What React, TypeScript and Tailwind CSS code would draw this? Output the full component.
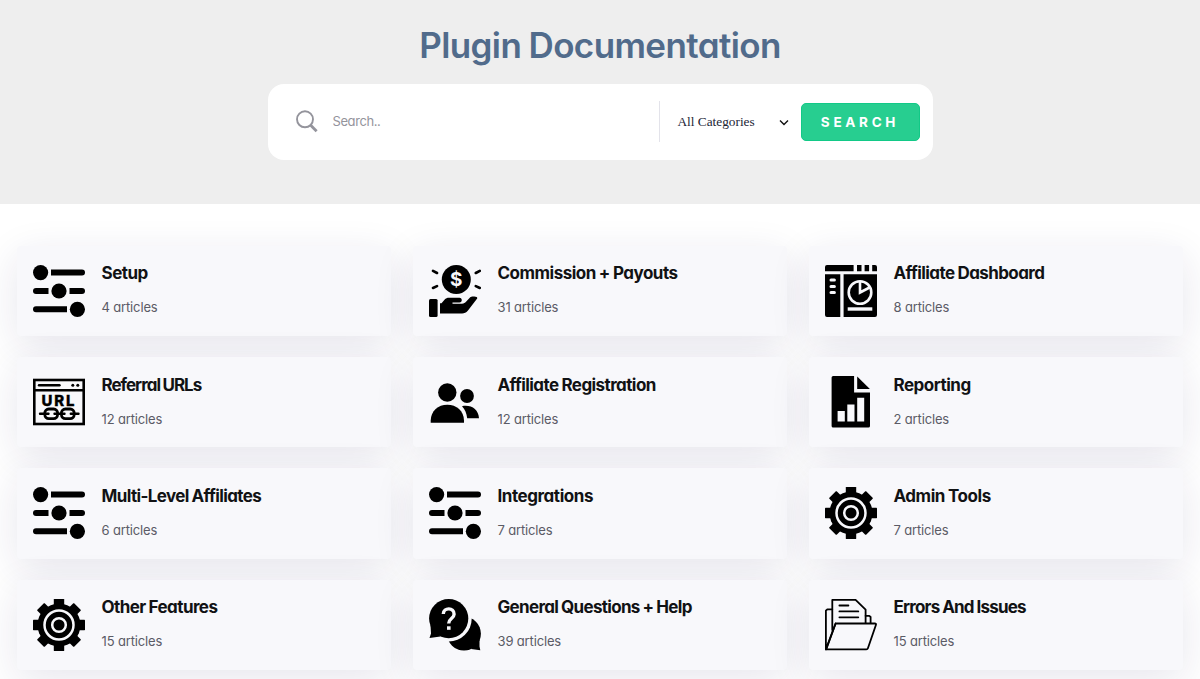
import React from 'react';

type IconName = 'sliders' | 'payout' | 'dashboard' | 'url' | 'users' | 'report' | 'gear' | 'chat' | 'folder';

interface Category {
  title: string;
  count: number;
  icon: IconName;
  tracking: string;
}

const CATEGORIES: Category[] = [
  { title: 'Setup', count: 4, icon: 'sliders', tracking: 'tracking-[-0.5px]' },
  { title: 'Commission + Payouts', count: 31, icon: 'payout', tracking: 'tracking-[-0.5px]' },
  { title: 'Affiliate Dashboard', count: 8, icon: 'dashboard', tracking: 'tracking-[-0.58px]' },
  { title: 'Referral URLs', count: 12, icon: 'url', tracking: 'tracking-[-1px]' },
  { title: 'Affiliate Registration', count: 12, icon: 'users', tracking: 'tracking-[-0.58px]' },
  { title: 'Reporting', count: 2, icon: 'report', tracking: 'tracking-[-0.5px]' },
  { title: 'Multi-Level Affiliates', count: 6, icon: 'sliders', tracking: 'tracking-[-0.63px]' },
  { title: 'Integrations', count: 7, icon: 'sliders', tracking: 'tracking-[-0.45px]' },
  { title: 'Admin Tools', count: 7, icon: 'gear', tracking: 'tracking-[-0.45px]' },
  { title: 'Other Features', count: 15, icon: 'gear', tracking: 'tracking-[-0.57px]' },
  { title: 'General Questions + Help', count: 39, icon: 'chat', tracking: 'tracking-[-0.68px]' },
  { title: 'Errors And Issues', count: 15, icon: 'folder', tracking: 'tracking-[-0.8px]' },
];

const BG = '#f8f8fb';

const ICONS: Record<IconName, React.ReactNode> = {
  sliders: (
    <>
      <circle cx="7.6" cy="7.6" r="7.6" />
      <path d="M18 4.6h31a3 3 0 0 1 0 6H18z" />
      <path d="M3 23h12.5v6H3a3 3 0 0 1 0-6z" />
      <circle cx="26" cy="26" r="7.6" />
      <path d="M36.5 23H49a3 3 0 0 1 0 6H36.5z" />
      <path d="M3 41.3h31v6H3a3 3 0 0 1 0-6z" />
      <circle cx="44.4" cy="44.3" r="7.6" />
    </>
  ),
  payout: (
    <>
      <circle cx="27.3" cy="14.5" r="14.5" />
      <text x="27.3" y="21.3" fontSize="19" fontWeight="700" textAnchor="middle" fill={BG}>$</text>
      <path d="M4 5.8l4 2.2M4 23l4-1.9M46.8 8l4-2.2M46.8 21.1l4 1.9" stroke="#000" strokeWidth="2.6" strokeLinecap="round" />
      <rect x="0" y="34" width="8.6" height="18" rx="1.5" />
      <path d="M11 38.2h1.5l3-3.4c1.4-1.4 2.6-2 4.500-2h10.500c3 0 3 4.600 0 4.600H23.500v1.300h9.500c2 0 3-.8 4-1.900l4-4.200c1.300-1.300 3.200-1.200 5.500-.9 2 .3 2.300 1.300 1.100 2.600L39 45.500c-2 2.200-3.500 2.900-6 2.900H11z" />
    </>
  ),
  dashboard: (
    <>
      <path d="M2 0h26.600v6.300H0V2a2 2 0 0 1 2-2zM32 0h4.500v6.300H32zM39.600 0h4.500v6.300h-4.500zM47.200 0H50a2 2 0 0 1 2 2v4.300h-4.800z" />
      <path d="M0 9.300h15.300V52H2a2 2 0 0 1-2-2zM18.600 9.300H52V50a2 2 0 0 1-2 2H18.600z" />
      <path d="M6 15h3.400M6 21.400h3.400M6 27.500h3.400" stroke={BG} strokeWidth="3" strokeLinecap="round" />
      <circle cx="35" cy="27.500" r="11.300" fill="none" stroke={BG} strokeWidth="2.600" />
      <path d="M35 16.500v11l9.600-5" fill="none" stroke={BG} strokeWidth="2.600" />
      <rect x="22.700" y="42.300" width="24.600" height="3.400" fill={BG} />
    </>
  ),
  url: (
    <>
      <rect x="1.300" y="4" width="49.400" height="44" fill="none" stroke="#000" strokeWidth="2.600" />
      <path d="M1 14.300h50" stroke="#000" strokeWidth="2.600" />
      <path d="M6 9.200h20.500" stroke="#000" strokeWidth="2.400" strokeLinecap="round" />
      <circle cx="39.800" cy="9.200" r="1.500" />
      <circle cx="44.800" cy="9.200" r="1.500" />
      <text x="8.600" y="30.300" fontSize="15" fontWeight="800" textLength="33" lengthAdjust="spacing" stroke="#000" strokeWidth=".3">URL</text>
      <g fill="none" stroke="#000" strokeWidth="2.800">
        <rect x="11.800" y="33" width="12.800" height="9.600" rx="4" />
        <rect x="28.400" y="33" width="12.800" height="9.600" rx="4" />
        <path d="M7 37.800h8.500M21.500 37.800h10M37.800 37.800h7.700" strokeWidth="2.400" strokeLinecap="round" />
      </g>
    </>
  ),
  users: (
    <>
      <circle cx="18.300" cy="16.500" r="9.200" />
      <path d="M1.700 46.700v-2.200C2 35 9 28.800 18.300 28.800S34.800 35 35 44.500v2.200z" />
      <circle cx="38" cy="20" r="6.900" />
      <path d="M33 30.200C42 28.500 49.500 33 50 42.300H38.200C37.600 37 36 33.500 33 30.200z" />
    </>
  ),
  report: (
    <>
      <path d="M8.200 0h20.900v16.400H45V50a1.600 1.600 0 0 1-1.600 1.600H8.200A1.600 1.600 0 0 1 6.600 50V1.600A1.600 1.600 0 0 1 8.200 0z" />
      <path d="M32.200.500L44.900 13H32.200z" />
      <path d="M12.600 35h7.200v10.600h-7.200zM22.300 28.600h7.200v17h-7.200zM32.200 21.700h7v23.900h-7z" fill={BG} />
    </>
  ),
  gear: (
    <>
      <circle cx="26" cy="26" r="21.500" />
      {[0, 45, 90, 135].map((deg) => (
        <rect key={deg} x="20.800" y="0" width="10.400" height="52" rx=".6" transform={`rotate(${deg} 26 26)`} />
      ))}
      <circle cx="26" cy="26" r="14.500" fill="none" stroke={BG} strokeWidth="2.500" />
      <circle cx="26" cy="26" r="6.800" fill="none" stroke={BG} strokeWidth="2.500" />
    </>
  ),
  chat: (
    <>
      <circle cx="35" cy="34.700" r="16.900" />
      <path d="M50.500 40v7.500l.8 3.800-9.300-1.300z" />
      <circle cx="19.700" cy="19.600" r="23" fill={BG} />
      <circle cx="19.700" cy="19.600" r="19.600" />
      <path d="M1.500 26L2 34.500.500 39l11-1.600z" />
      <path d="M14.300 15c.2-6.800 11-6.800 10.800.2-.1 4.600-5.400 4.200-5.400 9.300" fill="none" stroke={BG} strokeWidth="3.400" />
      <rect x="18" y="27.300" width="3.600" height="3.500" fill={BG} />
    </>
  ),
  folder: (
    <g fill="none" stroke="#000" strokeWidth="1.800" strokeLinejoin="round" strokeLinecap="round">
      <path d="M7.300 10.300H2.300L.9 11.700V50.400L10.600 24.500" />
      <path d="M7.300 31V.9H30.600L40.600 10.600V24.200" />
      <path d="M40.600 16.800H44.300L45.600 18V24.200" />
      <path d="M10.600 24.500H49.800Q51.400 24.500 50.900 26L42.900 49.200Q42.500 50.400 41.300 50.400H1.200Z" />
      <path d="M14.400 6.500H23.400M14.400 12.400H33.300M14.400 18.300H33.300" />
    </g>
  ),
};

const CategoryCard: React.FC<{ category: Category }> = ({ category }) => (
  <a className="flex h-[90.4px] gap-[17px] rounded-[4px] bg-[#f8f8fb] pl-4 pt-[19px] shadow-[0_10px_40px_rgba(36,30,90,0.11)]">
    <svg width="52" height="52" viewBox="0 0 52 52" className="shrink-0">{ICONS[category.icon]}</svg>
    <div className="-mt-[0.25px] -ml-[0.5px] whitespace-nowrap">
      <h2 className={`text-[17px] leading-[18px] font-bold text-[#111214] [word-spacing:-0.5px] ${category.tracking}`}>{category.title}</h2>
      <p className="mt-4 text-[13px] leading-[18px] tracking-[-0.15px] text-[#5b5b66]">{category.count} articles</p>
    </div>
  </a>
);

const SearchBar: React.FC = () => (
  <form className="mx-auto flex h-[76.5px] w-[665px] items-center rounded-[16px] bg-white pr-[12.5px] pl-7">
    <svg width="23" height="23" viewBox="0 0 23 23" fill="none" stroke="#94949c" className="shrink-0">
      <circle cx="9" cy="9.300" r="8" strokeWidth="1.900" />
      <path d="M14.200 14.700L20.600 21.300" strokeWidth="2.800" />
    </svg>
    <input
      type="text"
      placeholder="Search.."
      className="ml-[14px] w-[326px] text-[13px] tracking-[-0.4px] outline-none placeholder:text-[#94949c]"
    />
    <button type="button" className="flex h-[41px] w-[142px] items-center justify-between border-l border-[#e3e3ea] pr-3 pl-[18px] font-['Liberation_Serif',serif] text-[13.3px] text-[#1c2536]">
      All Categories
      <svg width="10" height="7" viewBox="0 0 10 7" fill="none" stroke="#111" strokeWidth="1.400" className="mt-[2px]">
        <path d="M1 1.500l4 4 4-4" />
      </svg>
    </button>
    <button type="button" className="h-[38px] w-[119px] rounded-[5px] border border-[#12c987] bg-[#27ce90] text-[13.5px] font-bold tracking-[3.7px] text-white">
      SEARCH
    </button>
  </form>
);

const App: React.FC = () => {
  return (
    <div className="h-[679px] overflow-hidden bg-white font-['Inter',sans-serif] [font-feature-settings:'cv11']">
      <header className="h-[203.5px] bg-[#eeeeee] pt-[21px]">
        <h1 className="mb-[14.5px] text-center text-[35px] leading-[48px] font-semibold tracking-[-0.6px] text-[#516b8b] [word-spacing:-1px]">
          Plugin Documentation
        </h1>
        <SearchBar />
      </header>
      <main className="grid grid-cols-3 gap-x-[22px] gap-y-[21px] pt-[42px] pr-[17px] pl-[17px]">
        {CATEGORIES.map((category) => (
          <CategoryCard key={category.title} category={category} />
        ))}
      </main>
    </div>
  );
};

export default App;
